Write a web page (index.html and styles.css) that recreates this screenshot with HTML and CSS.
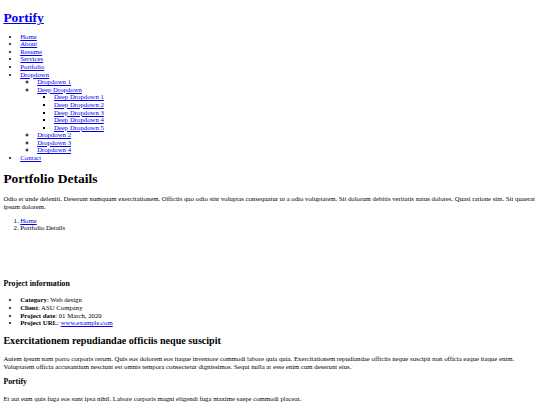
FILE: index.html
```html
<!DOCTYPE html>
<html lang="en">
<head>
  <meta charset="UTF-8">
  <title>Portfolio Details - Portify</title>
  <link rel="stylesheet" href="styles.css">
</head>
<body>

<header id="header">
  <h1 class="logo"><a href="index.html">Portify</a></h1>
  <nav class="navbar">
    <ul>
      <li><a href="#hero">Home</a></li>
      <li><a href="#about">About</a></li>
      <li><a href="#resume">Resume</a></li>
      <li><a href="#services">Services</a></li>
      <li><a href="#portfolio">Portfolio</a></li>
      <li class="dropdown"><a href="#">Dropdown</a>
        <ul>
          <li><a href="#">Dropdown 1</a></li>
          <li class="dropdown"><a href="#">Deep Dropdown</a>
            <ul>
              <li><a href="#">Deep Dropdown 1</a></li>
              <li><a href="#">Deep Dropdown 2</a></li>
              <li><a href="#">Deep Dropdown 3</a></li>
              <li><a href="#">Deep Dropdown 4</a></li>
              <li><a href="#">Deep Dropdown 5</a></li>
            </ul>
          </li>
          <li><a href="#">Dropdown 2</a></li>
          <li><a href="#">Dropdown 3</a></li>
          <li><a href="#">Dropdown 4</a></li>
        </ul>
      </li>
      <li><a href="#contact">Contact</a></li>
    </ul>
  </nav>
</header>

<main id="main">
  <section class="breadcrumbs">
    <h1>Portfolio Details</h1>
    <p>Odio et unde deleniti. Deserunt numquam exercitationem. Officiis quo odio sint voluptas consequatur ut a odio voluptatem. Sit dolorum debitis veritatis natus dolores. Quasi ratione sint. Sit quaerat ipsum dolorem.</p>
    <ol>
      <li><a href="index.html">Home</a></li>
      <li>Portfolio Details</li>
    </ol>
  </section>

  <section class="portfolio-details">
    <div class="portfolio-slider"></div>

    <div class="portfolio-info">
      <h3>Project information</h3>
      <ul>
        <li><strong>Category</strong>: Web design</li>
        <li><strong>Client</strong>: ASU Company</li>
        <li><strong>Project date</strong>: 01 March, 2020</li>
        <li><strong>Project URL</strong>: <a href="#">www.example.com</a></li>
      </ul>
    </div>

    <div class="portfolio-description">
      <h2>Exercitationem repudiandae officiis neque suscipit</h2>
      <p>Autem ipsum nam porro corporis rerum. Quis eos dolorem eos itaque inventore commodi labore quia quia. Exercitationem repudiandae officiis neque suscipit non officia eaque itaque enim. Voluptatem officia accusantium nesciunt est omnis tempora consectetur dignissimos. Sequi nulla at esse enim cum deserunt eius.</p>
    </div>
  </section>

  <footer id="footer">
    <h3>Portify</h3>
    <p>Et aut eum quis fuga eos sunt ipsa nihil. Labore corporis magni eligendi fuga maxime saepe commodi placeat.</p>
  </footer>
</main>

</body>
</html>
```

FILE: styles.css
```css
body {
  font-family: "Liberation Serif", "Times New Roman", serif;
  font-size: 6.75px;
  line-height: 1.125;
  margin: 3.375px;
  color: #000;
  background: #fff;
}
ul,
ol {
  padding-left: 2.5em;
}
a {
  color: #0000ee;
}
.logo {
  margin: 7px 0;
}
.portfolio-slider {
  height: 33px;
}
```
